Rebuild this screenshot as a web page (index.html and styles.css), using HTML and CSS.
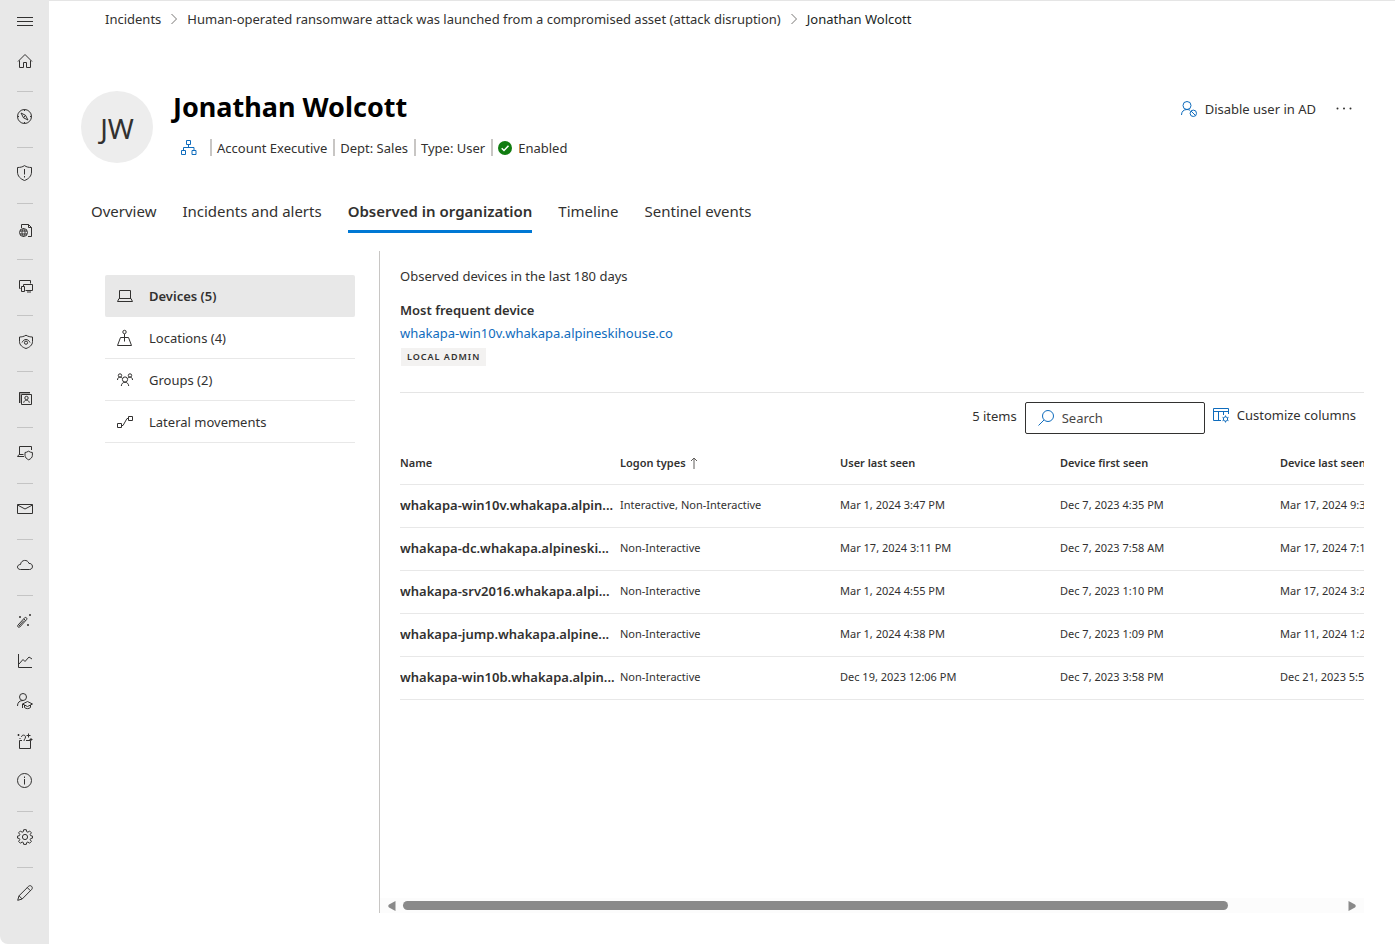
FILE: index.html
```html
<!DOCTYPE html>
<html lang="en">
<head>
<meta charset="utf-8">
<meta name="viewport" content="width=device-width, initial-scale=1">
<title>Jonathan Wolcott</title>
<link rel="stylesheet" href="styles.css">
</head>
<body>
<nav class="rail" aria-label="Main">
  <button class="rail-item" aria-label="Menu"><svg class="icon" viewBox="0 0 16 16"><path d="M0 4.5h16M0 8.5h16M0 12.5h16"/></svg></button>
  <a class="rail-item" href="#" aria-label="Home"><svg class="icon" viewBox="0 0 16 16"><path d="M1 8.5 8 1.5l7 7M2.5 7.5v7h4v-5h3v5h4v-7"/></svg></a>
  <hr class="rail-line">
  <a class="rail-item" href="#" aria-label="Explore"><svg class="icon" viewBox="0 0 16 16"><circle cx="7.5" cy="7.5" r="7"/><path d="M4 4l4.500 2.300L11 11 6.500 8.800zM6.500 8.800l2-2.500M7.500.500V2M7.500 13v1.500M.500 7.500H2M13 7.500h1.500"/></svg></a>
  <hr class="rail-line">
  <a class="rail-item" href="#" aria-label="Incidents"><svg class="icon" viewBox="0 0 16 16"><path d="M7.500.600C5.500 2 3.300 2.500.500 2.500V7c0 4.200 3 7 7 8.500 4-1.500 7-4.300 7-8.500V2.500C11.700 2.500 9.500 2 7.500.600zM7.500 4v5.500M7.500 11v1.500"/></svg></a>
  <hr class="rail-line">
  <a class="rail-item" href="#" aria-label="Threat analytics"><svg class="icon" viewBox="0 -2 16 16"><path d="M4.500 5V1.500h7l3 3v9H11M11.500 1.500v3h3"/><circle cx="6.500" cy="9.500" r="4"/><path d="M3 8h7M3 11h7M6.500 5.500c-2 2.500-2 5.500 0 8M6.500 5.500c2 2.500 2 5.500 0 8"/></svg></a>
  <hr class="rail-line">
  <a class="rail-item" href="#" aria-label="Assets"><svg class="icon" viewBox="0 -2 16 16"><path d="M3.500 9.500h-1v-8h11v3M6.500 7V5.500h9v6h-7M10 13h4M4.500 7.500h3v5h-3z"/></svg></a>
  <hr class="rail-line">
  <a class="rail-item" href="#" aria-label="Protection"><svg class="icon" viewBox="0 -2 16 16"><path d="M9 .200C7 1.500 4.600 2 2.500 2v4.500c0 3.700 3 5.800 6.500 7 3.500-1.200 6.500-3.300 6.500-7V2C13.400 2 11 1.500 9 .200zM5 7.500c1.800-4 6.200-4 8 0"/><circle cx="9" cy="7.700" r="1.600"/></svg></a>
  <hr class="rail-line">
  <a class="rail-item" href="#" aria-label="Identities"><svg class="icon" viewBox="0 -2 16 16"><path class="shade" d="M2 1h11v2H4v9H2z"/><path d="M2.500 12V1.500H13M4.500 3.500h10v10h-10z"/><circle cx="9.500" cy="7" r="1.700"/><path d="M6.700 11.700c.400-3.300 5.200-3.300 5.600 0"/></svg></a>
  <hr class="rail-line">
  <a class="rail-item" href="#" aria-label="Endpoints"><svg class="icon" viewBox="0 0 16 16"><path d="M2.500 9.500v-8h12V5M7 11.500H.500l1.500-2h4.500M11.500 6.200C10.300 7 9 7.500 8 7.500v2.800c0 2.200 1.700 3.600 3.700 4.500 2-.900 3.700-2.300 3.700-4.500V7.500c-1.300 0-2.700-.500-3.900-1.300z"/></svg></a>
  <hr class="rail-line">
  <a class="rail-item" href="#" aria-label="Email"><svg class="icon" viewBox="0 0 16 16"><path d="M.500 3.500h15v9H.500zM.500 4 8 8l7.500-4"/></svg></a>
  <hr class="rail-line">
  <a class="rail-item" href="#" aria-label="Cloud apps"><svg class="icon" viewBox="0 0 16 16"><path d="M3.500 12.500c-4 0-4-5 0-5 .500-5 7.300-5.500 8.500-1 4.300-.500 4.700 6 .500 6z"/></svg></a>
  <hr class="rail-line">
  <a class="rail-item" href="#" aria-label="Automation"><svg class="icon" viewBox="0 0 16 16"><path d="M.900 12.200 7.700 4.700c1.200-1 2.900.700 1.900 1.900L2.800 14c-1.200 1-2.900-.700-1.900-1.800zM7 6l1.500 1.500M2 13l5-5.500"/><path class="solid" d="M12 1h2v2h-2zM2 3h2v2H2zM10 11h2v2h-2z"/></svg></a>
  <a class="rail-item" href="#" aria-label="Reports"><svg class="icon" viewBox="0 0 16 16"><path d="M1.500 1v13.500H15M2 11l4-4.500 2 2L12 4l3 2"/></svg></a>
  <a class="rail-item" href="#" aria-label="Learning"><svg class="icon" viewBox="0 0 16 16"><circle cx="6" cy="4" r="3.500"/><path d="M.500 13c0-3.500 2-5.500 5.500-5.500M5.500 11 10.500 8.500l5 2.500-5 2.500zM7.500 12v2.500c2 1.500 4 1.500 6 0V12M5.500 11v4"/></svg></a>
  <a class="rail-item" href="#" aria-label="Trials"><svg class="icon" viewBox="0 0 16 16"><path d="M5 7.500H2.500v8h11v-8H9M4.500 4c0-2.500 4-2.500 4 0 0 2-1.500 2-1.500 4M11.500.500v4M9.500 2.500h4M14 5v3M12.500 6.500h3M1.500 1v2M.500 2h2M2.500 5.500h1"/></svg></a>
  <a class="rail-item" href="#" aria-label="More information"><svg class="icon" viewBox="0 0 16 16"><circle cx="7.500" cy="7.500" r="7"/><path d="M7.500 6v5.500M7.500 3.500v1.500"/></svg></a>
  <hr class="rail-line">
  <a class="rail-item" href="#" aria-label="Settings"><svg class="icon" viewBox="0 0 16 16"><circle cx="8" cy="8" r="2.600"/><path d="M6.700.700h2.600l.400 2 1.200.500 1.700-1.200 1.800 1.800-1.200 1.700.500 1.200 1.800.400v2l-1.800.400-.500 1.200 1.200 1.700-1.800 1.800-1.700-1.200-1.200.500-.400 1.900H6.700l-.400-1.900-1.200-.500-1.700 1.200-1.800-1.800 1.200-1.700-.500-1.200-1.800-.400v-2l1.800-.400.500-1.200L1.600 3.800 3.400 2l1.700 1.200 1.200-.500z"/></svg></a>
  <hr class="rail-line">
  <a class="rail-item" href="#" aria-label="Customize navigation"><svg class="icon" viewBox="0 0 16 16"><path d="M.700 15.300 2 10.800 11.700 1.200c2-1.700 4.700 1 3.100 3.100L5.200 14zM10.300 2.600l3.100 3.100M2 10.800 5.200 14"/></svg></a>
</nav>

<main class="page">
  <nav class="crumbs" aria-label="Breadcrumb">
    <a href="#">Incidents</a>
    <svg class="chevron" viewBox="0 0 8 12"><path d="M1.500 1 6.500 6l-5 5"/></svg>
    <a href="#">Human-operated ransomware attack was launched from a compromised asset (attack disruption)</a>
    <svg class="chevron" viewBox="0 0 8 12"><path d="M1.500 1 6.500 6l-5 5"/></svg>
    <span class="current">Jonathan Wolcott</span>
  </nav>

  <header class="profile">
    <div class="avatar">JW</div>
    <div class="identity">
      <h1>Jonathan Wolcott</h1>
      <div class="facts">
        <svg class="icon blue org" viewBox="0 0 16 16"><path d="M5.500.500h4v4h-4zM.500 10.500h4v4h-4zM11 10.500h4v4h-4zM7.500 4.500v3M2.500 10.500v-3H13v3"/></svg>
        <span class="fact">Account Executive</span>
        <span class="fact">Dept: Sales</span>
        <span class="fact">Type: User</span>
        <span class="fact enabled"><svg class="check" viewBox="0 0 14 14"><circle cx="7" cy="7" r="7"/><path d="M3.700 7.200 6 9.500l4.500-4.700"/></svg>Enabled</span>
      </div>
    </div>
    <div class="actions">
      <button class="action"><svg class="icon blue" viewBox="0 0 16 16"><circle cx="6" cy="4.500" r="4"/><path d="M.500 14c0-3.500 2.200-5.500 5.500-5.500 1.300 0 2.200.300 3 .800"/><circle cx="12.300" cy="12.300" r="3.200"/><path d="m10 10 4.600 4.600"/></svg>Disable user in AD</button>
      <button class="more" aria-label="More actions"><svg class="dots" viewBox="0 0 16 4"><circle cx="1.500" cy="1.500" r="1"/><circle cx="8" cy="1.500" r="1"/><circle cx="14.500" cy="1.500" r="1"/></svg></button>
    </div>
  </header>

  <div class="tabs" role="tablist">
    <button class="tab" role="tab">Overview</button>
    <button class="tab" role="tab">Incidents and alerts</button>
    <button class="tab selected" role="tab" aria-selected="true">Observed in organization</button>
    <button class="tab" role="tab">Timeline</button>
    <button class="tab" role="tab">Sentinel events</button>
  </div>

  <div class="body">
    <nav class="side" aria-label="Observed">
      <a class="side-item active" href="#"><svg class="icon" viewBox="0 0 16 16"><path d="M2.500 10.500v-8h11v8M2 10.500h12l1.500 3H.500z"/></svg>Devices (5)</a>
      <a class="side-item" href="#"><svg class="icon" viewBox="0 0 16 16"><circle cx="7.500" cy="2" r="1.700"/><path d="M7.500 4v7.500M5.500 7.500h-2l-3 8h14l-3-8h-2M5 7.500h5"/></svg>Locations (4)</a>
      <a class="side-item" href="#"><svg class="icon" viewBox="0 0 16 16"><circle cx="3" cy="3.500" r="1.700"/><circle cx="13" cy="3.500" r="1.700"/><circle cx="8" cy="7.500" r="2.600"/><path d="M.500 8c0-3.500 3.500-3.500 5-1.500M15.500 8c0-3.500-3.500-3.500-5-1.500M4.300 14c.200-5 7.200-5 7.400 0"/></svg>Groups (2)</a>
      <a class="side-item" href="#"><svg class="icon" viewBox="0 0 16 16"><path d="M.500 9.500h4v4h-4zM11.500 2.500h4v4h-4zM4.500 11.500H6l4-7h1.500"/></svg>Lateral movements</a>
    </nav>

    <section class="pane">
      <div class="pane-inner">
        <p class="lead">Observed devices in the last 180 days</p>
        <h2>Most frequent device</h2>
        <a class="device" href="#">whakapa-win10v.whakapa.alpineskihouse.co</a>
        <span class="tag">LOCAL ADMIN</span>

        <div class="toolbar">
          <span class="count">5 items</span>
          <label class="search">
            <svg class="icon blue" viewBox="0 0 16 16"><circle cx="10" cy="6" r="5.500"/><path d="M6 10 .500 15.500"/></svg>
            <input type="text" placeholder="Search" aria-label="Search">
          </label>
          <button class="action columns"><svg class="icon blue" viewBox="0 0 16 16"><path d="M8 13.500H.500v-12h15V7M.500 4.500h15M5.500 4.500v9M10.500 4.500V8"/><circle cx="12.500" cy="12" r="2.200"/><path d="M12.500 8.500v1.300M12.500 14.200v1.300M9.500 10.300l1.100.600M14.400 13.100l1.100.600M9.500 13.700l1.100-.600M14.400 10.900l1.100-.600"/></svg>Customize columns</button>
        </div>

        <div class="table-wrap">
          <table class="grid">
            <thead>
              <tr><th>Name</th><th>Logon types <svg class="sort" viewBox="0 0 8 12"><path d="M4 12V1M1 4l3-3 3 3"/></svg></th><th>User last seen</th><th>Device first seen</th><th>Device last seen</th></tr>
            </thead>
            <tbody>
              <tr><td class="name">whakapa-win10v.whakapa.alpin...</td><td>Interactive, Non-Interactive</td><td>Mar 1, 2024 3:47 PM</td><td>Dec 7, 2023 4:35 PM</td><td>Mar 17, 2024 9:37</td></tr>
              <tr><td class="name">whakapa-dc.whakapa.alpineski...</td><td>Non-Interactive</td><td>Mar 17, 2024 3:11 PM</td><td>Dec 7, 2023 7:58 AM</td><td>Mar 17, 2024 7:11</td></tr>
              <tr><td class="name">whakapa-srv2016.whakapa.alpi...</td><td>Non-Interactive</td><td>Mar 1, 2024 4:55 PM</td><td>Dec 7, 2023 1:10 PM</td><td>Mar 17, 2024 3:25</td></tr>
              <tr><td class="name">whakapa-jump.whakapa.alpine...</td><td>Non-Interactive</td><td>Mar 1, 2024 4:38 PM</td><td>Dec 7, 2023 1:09 PM</td><td>Mar 11, 2024 1:22</td></tr>
              <tr><td class="name">whakapa-win10b.whakapa.alpin...</td><td>Non-Interactive</td><td>Dec 19, 2023 12:06 PM</td><td>Dec 7, 2023 3:58 PM</td><td>Dec 21, 2023 5:55</td></tr>
            </tbody>
          </table>
        </div>
      </div>
      <div class="scroller">
        <svg class="arrow" viewBox="0 0 8 10"><path d="M7.500 0v10L1 6.500q-1.500-1.500 0-3z"/></svg>
        <div class="track"><div class="thumb"></div></div>
        <svg class="arrow" viewBox="0 0 8 10"><path d="M.500 0v10L7 6.500q1.500-1.500 0-3z"/></svg>
      </div>
    </section>
  </div>
</main>
</body>
</html>
```

FILE: styles.css
```css
* { box-sizing: border-box; }

body {
  margin: 0;
  display: flex;
  min-height: 100vh;
  background: #fff;
  color: #323130;
  font: 13px/20px "Noto Sans", "Open Sans", sans-serif;
}

a { color: inherit; text-decoration: none; }

button {
  padding: 0;
  border: 0;
  background: none;
  color: inherit;
  font: inherit;
}

h1, h2, p { margin: 0; }

.icon {
  flex: none;
  width: 16px;
  height: 16px;
  fill: none;
  stroke: #323130;
  stroke-width: 1;
  overflow: visible;
}
.icon.blue { stroke: #0f6cbd; }
.icon .solid { fill: #605e5c; stroke: none; }
.icon .shade { fill: #a19f9d; stroke: none; }

/* Navigation rail */
.rail {
  flex: none;
  width: 49px;
  padding-top: 1px;
  background: #e8e8e8;
  border-bottom-left-radius: 8px;
}
.rail-item {
  display: flex;
  align-items: center;
  justify-content: center;
  width: 100%;
  height: 40px;
}
.rail-line {
  width: 16px;
  height: 1px;
  margin: 10px auto 5px;
  border: 0;
  background: #c4c4c4;
}

/* Page */
.page {
  flex: 1;
  min-width: 0;
  display: flex;
  flex-direction: column;
  padding: 0 31px 31px 32px;
  border-top: 1px solid #e5e5e5;
}

.crumbs {
  display: flex;
  align-items: center;
  gap: 9px;
  padding: 8px 0 0 24px;
  white-space: nowrap;
}
.crumbs .current { color: #201f1e; }
.chevron {
  width: 8px;
  height: 12px;
  fill: none;
  stroke: #797775;
}

.profile {
  display: flex;
  gap: 20px;
  margin-top: 60px;
}
.avatar {
  flex: none;
  display: flex;
  align-items: center;
  justify-content: center;
  width: 72px;
  height: 72px;
  margin-top: 2px;
  padding-top: 2px;
  border-radius: 50%;
  background: #ededed;
  font-size: 28px;
}
.identity { flex: 1; }
h1 {
  color: #000;
  font-size: 27px;
  line-height: 36px;
  font-weight: 700;
}
.facts {
  display: flex;
  align-items: center;
  margin-top: 14px;
}
.org { margin: 0 13px 0 8px; }
.fact {
  display: flex;
  align-items: center;
  height: 17px;
  padding: 0 6px 0 5px;
  border-left: 2px solid #c8c6c4;
}
.enabled { gap: 6px; }
.check { width: 14px; height: 14px; fill: #107c10; }
.check path { fill: none; stroke: #fff; stroke-width: 1.500; }

.actions {
  display: flex;
  gap: 20px;
  height: 40px;
  padding-right: 12px;
}
.action { display: flex; align-items: center; gap: 8px; }
.dots { display: block; width: 16px; height: 4px; fill: #323130; }

.tabs {
  display: flex;
  gap: 26px;
  margin-top: 27px;
  padding-left: 10px;
  font-size: 15px;
  line-height: 22px;
}
.tab {
  padding: 10px 0 8px;
  border-bottom: 3px solid transparent;
}
.tab.selected { border-color: #0078d4; font-weight: 600; }

.body { flex: 1; display: flex; gap: 24px; margin-top: 18px; padding-left: 24px; }

.side { flex: none; width: 250px; padding-top: 24px; }
.side-item {
  display: flex;
  align-items: center;
  gap: 16px;
  height: 42px;
  padding: 0 12px;
  border-bottom: 1px solid #e8e8e8;
}
.side-item.active {
  background: #e8e8e8;
  border-radius: 2px;
  font-weight: 600;
}

.pane {
  flex: 1;
  min-width: 0;
  display: flex;
  flex-direction: column;
  border-left: 1px solid #c8c6c4;
}
.pane-inner { flex: 1; padding: 15px 0 0 20px; }
.lead { margin-bottom: 14px; }
h2 { font-size: 13px; line-height: 20px; font-weight: 600; }
.device { display: block; margin: 3px 0 5px; color: #0f6cbd; }
.tag {
  display: block;
  width: max-content;
  margin-left: 1px;
  padding: 0 6px;
  background: #f3f2f1;
  font-size: 9px;
  line-height: 18px;
  font-weight: 600;
  letter-spacing: 1px;
}

.toolbar {
  display: flex;
  align-items: flex-start;
  justify-content: flex-end;
  gap: 8px;
  margin-top: 26px;
  padding: 9px 8px 6px 0;
  border-top: 1px solid #e5e5e5;
}
.count { line-height: 28px; }
.columns { height: 26px; }
.search {
  display: flex;
  align-items: center;
  gap: 8px;
  width: 180px;
  height: 32px;
  padding: 0 12px;
  border: 1px solid #323130;
  border-radius: 2px;
}
.search input {
  flex: 1;
  min-width: 0;
  padding: 0;
  border: 0;
  outline: 0;
  background: none;
  font: inherit;
}
.search input::placeholder { color: #484644; }

.table-wrap { overflow: hidden; }
.grid {
  width: 1100px;
  table-layout: fixed;
  border-collapse: collapse;
  font-size: 11px;
}
.grid th, .grid td {
  height: 43px;
  padding: 0 4px 2px 0;
  border-bottom: 1px solid #e8e8e8;
  text-align: left;
  white-space: nowrap;
}
.grid th { height: 44px; padding: 2px 4px 0 0; font-weight: 600; }
.grid .name {
  font-size: 13px;
  font-weight: 600;
}
.sort {
  width: 8px;
  height: 12px;
  margin-left: 2px;
  vertical-align: -2px;
  fill: none;
  stroke: #605e5c;
}

.scroller {
  display: flex;
  align-items: center;
  gap: 7px;
  height: 15px;
  padding: 0 8px;
  background: #fcfcfc;
}
.arrow { flex: none; width: 8px; height: 10px; fill: #8a8a8a; }
.track { flex: 1; }
.thumb { width: 88%; height: 9px; border-radius: 5px; background: #8a8a8a; }
```
